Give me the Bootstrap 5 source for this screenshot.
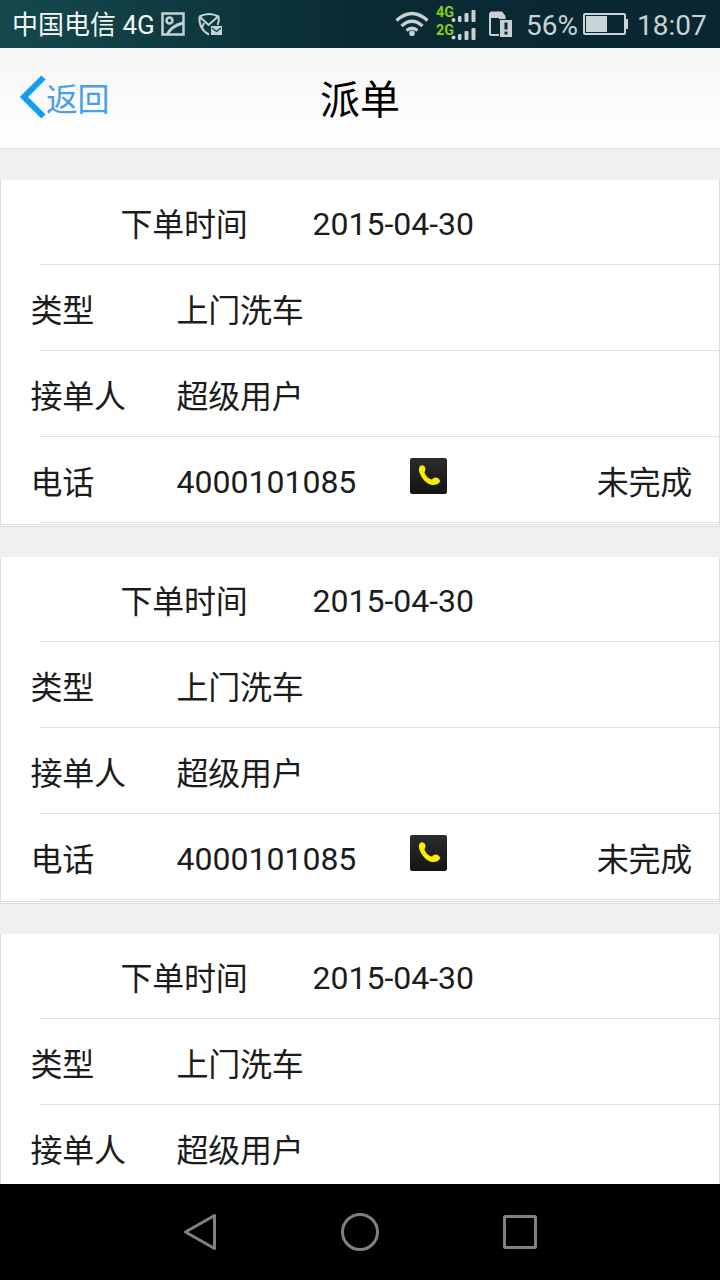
<!DOCTYPE html>
<html lang="zh-CN">
<head>
<meta charset="utf-8">
<meta name="viewport" content="width=device-width, initial-scale=1">
<title>派单</title>
<link href="https://cdn.jsdelivr.net/npm/bootstrap@5.3.0/dist/css/bootstrap.min.css" rel="stylesheet">
<style>
html,body{height:100%}
body{font-family:Roboto,"Noto Sans CJK SC",sans-serif;background:#f0f0f0;color:#1c1c1c;overflow:hidden}
.screen{width:720px;height:1280px}
.statusbar{height:48px;background:linear-gradient(90deg,#15494d 0,#0f3c42 22%,#0a2a34 50%,#0a2630 100%);color:#c6d2d4;font-size:28px;line-height:48px}
.statusbar svg{display:block;flex:none}
.statusbar span{padding-top:3px}
.statusbar .carrier{font-size:26px;color:#f4f8f8;width:149px;margin-left:12px;padding-top:2px}
.titlebar{height:101px;background:linear-gradient(#f5f5f5,#fff);border-bottom:1px solid #ddd;display:grid;grid-template-columns:1fr auto 1fr;grid-template-rows:100px}
.titlebar h1{font-size:40px;line-height:100px;color:#000;font-weight:400;padding-top:3px}
.back{color:#4aa0e6;font-size:32px;padding-left:20px}
.back svg{margin-bottom:2px}
.back span{padding-top:4px;letter-spacing:-.5px}
.orders{padding-top:31px;gap:30px}
.order{border:0;border-left:1px solid #ddd;border-right:1px solid #ddd;height:347px;flex:none;border-bottom:3px double #dcdcdc;background:#fff}
.line{height:86px;margin-left:39px;border-bottom:1px solid #e0e0e0;font-size:32px;line-height:52px;padding-top:20px;white-space:nowrap;letter-spacing:-.25px}
.line:first-child{height:85px;padding-top:19px}
.name{width:146px;margin-left:-9.5px}
.when{width:192px;margin-left:80.5px}
.digits{line-height:50px;letter-spacing:0}
.num{width:233.500px}
.line svg{margin-top:1px}
.state{margin-right:27px}
.navkeys{height:96px}
</style>
</head>
<body>
<div class="screen d-flex flex-column overflow-hidden">
  <div class="statusbar d-flex align-items-center flex-shrink-0 text-nowrap">
    <span class="carrier">中国电信 4G</span>
    <svg width="62" height="48" viewBox="161 0 62 48" fill="none" stroke="#c3d3d3" stroke-width="2.5">
      <rect x="162.5" y="13.5" width="21" height="21"/><circle cx="169.5" cy="20.5" r="3"/><path d="M167 35q4-9 16-12" stroke-width="3"/>
      <path d="M199.500 16.500Q209 11.500 218.500 16.500Q219.500 21 217.500 25M199.500 16.500Q198.500 29 209 34.500M200 17l8.500 8 9.500-8.500M204 23l-2 5" stroke-width="2"/>
      <path fill="#c3d3d3" stroke="none" d="M211 26h11v9h-11z"/><path stroke="#0e373e" stroke-width="1.300" d="M212 28l4.500 3.500 4.500-3.500"/>
    </svg>
    <svg class="ms-auto" width="124" height="48" viewBox="395 0 124 48" fill="#c8d0d1">
      <g fill="none" stroke="#c8d0d1" stroke-width="3.200"><path d="M396.500 20.500q15.500-14 31 0M401.500 26q10.500-9.500 21 0M406.500 30.500q5.500-4.500 11 0"/></g><circle cx="412" cy="33.300" r="2.800"/>
      <text x="436" y="17" font-family="Roboto" font-size="14.500" font-weight="700" fill="#84cf13" textLength="18" lengthAdjust="spacingAndGlyphs">4G</text>
      <text x="436" y="34.500" font-family="Roboto" font-size="14.500" font-weight="700" fill="#84cf13" textLength="18" lengthAdjust="spacingAndGlyphs">2G</text>
      <circle cx="453.500" cy="20" r="2"/><rect x="458" y="16" width="3.500" height="6" rx="1"/><rect x="464.500" y="13" width="4" height="9" rx="1"/><rect x="471.500" y="10" width="4" height="12" rx="1"/>
      <circle cx="453.500" cy="37.500" r="2"/><rect x="458" y="34" width="3.500" height="6" rx="1"/><rect x="464.500" y="31" width="4" height="9" rx="1"/><rect x="471.500" y="28" width="4" height="12" rx="1"/>
      <path fill-rule="evenodd" d="M491 11.500H502L505.500 16V19H499V36H490.500L489 34.500V13.500zM491 18V34H499V18z"/><path fill-rule="evenodd" d="M500 20h12v17h-12zM504.500 22.500v7h3v-7zM504.500 31.500v3h3v-3z"/>
    </svg>
    <span style="margin-left:7px;width:57px">56%</span>
    <svg width="46" height="48" viewBox="583 0 46 48" fill="#c8d4d5"><rect x="584" y="14" width="41" height="20" rx="1" fill="none" stroke="#c8d4d5" stroke-width="2"/><path d="M586 16h21v16h-21zM625 19h3v10h-3z"/></svg>
    <span style="margin-left:8px;width:83px">18:07</span>
  </div>

  <header class="titlebar flex-shrink-0">
    <a class="back d-flex align-items-center text-decoration-none" href="#">
      <svg width="26" height="44" viewBox="0 0 26 44"><path d="M23.500 2.500L4 22l19.500 19.500" fill="none" stroke="#149cf3" stroke-width="6"/></svg>
      <span>返回</span>
    </a>
    <h1 class="m-0">派单</h1>
  </header>

  <main class="orders d-flex flex-column flex-grow-1 overflow-hidden">
    <section class="order">
      <div class="line d-flex"><span class="when">下单时间</span><span class="digits">2015-04-30</span></div>
      <div class="line d-flex"><span class="name">类型</span><span>上门洗车</span></div>
      <div class="line d-flex"><span class="name">接单人</span><span>超级用户</span></div>
      <div class="line d-flex"><span class="name">电话</span><span class="num digits">4000101085</span>
        <svg width="37" height="36" viewBox="0 0 37 36"><defs><linearGradient id="tile" x2="0" y2="1"><stop stop-color="#2b2b2b"/><stop offset="1" stop-color="#151515"/></linearGradient><symbol id="call" viewBox="0 0 37 36"><rect width="37" height="36" rx="2" fill="url(#tile)"/><path d="M10 8q3-2 5 1 1 2 0 4-1 1 0 3 2 4 5 5 2 1 3-.5 3-2 6 .5 2 2 0 4-3 3-9 1.500Q14 24 10.500 17 7.500 11 10 8z" fill="#f7ee00"/></symbol></defs><use href="#call"/></svg>
        <span class="state ms-auto">未完成</span></div>
    </section>
    <section class="order">
      <div class="line d-flex"><span class="when">下单时间</span><span class="digits">2015-04-30</span></div>
      <div class="line d-flex"><span class="name">类型</span><span>上门洗车</span></div>
      <div class="line d-flex"><span class="name">接单人</span><span>超级用户</span></div>
      <div class="line d-flex"><span class="name">电话</span><span class="num digits">4000101085</span>
        <svg width="37" height="36"><use href="#call"/></svg>
        <span class="state ms-auto">未完成</span></div>
    </section>
    <section class="order">
      <div class="line d-flex"><span class="when">下单时间</span><span class="digits">2015-04-30</span></div>
      <div class="line d-flex"><span class="name">类型</span><span>上门洗车</span></div>
      <div class="line d-flex"><span class="name">接单人</span><span>超级用户</span></div>
    </section>
  </main>

  <nav class="navkeys bg-black flex-shrink-0 d-flex justify-content-center">
    <svg width="360" height="96" viewBox="180 0 360 96" fill="none" stroke="#808080" stroke-width="3" stroke-linejoin="round"><path d="M185.500 48L214.500 31.500v33z"/><circle cx="360" cy="48" r="17.500"/><rect x="504.500" y="32.500" width="31" height="31" rx="1"/></svg>
  </nav>
</div>
<script src="https://cdn.jsdelivr.net/npm/bootstrap@5.3.0/dist/js/bootstrap.bundle.min.js"></script>
</body>
</html>
